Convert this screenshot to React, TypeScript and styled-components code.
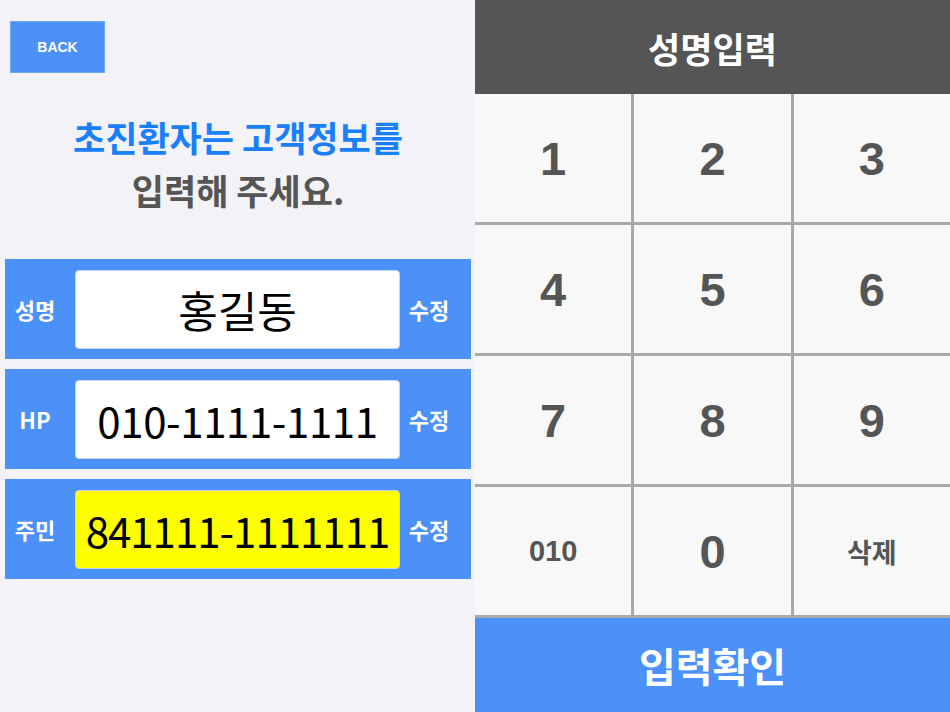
import React from 'react';
import styled, { createGlobalStyle } from 'styled-components';

const GlobalStyle = createGlobalStyle`
  html, body {
    margin: 0;
    padding: 0;
  }
  body {
    font-family: 'Liberation Sans', 'Noto Sans CJK KR', sans-serif;
  }
`;

const Screen = styled.div`
  display: flex;
  width: 950px;
  height: 712px;
  overflow: hidden;
`;

const LeftPanel = styled.div`
  display: flex;
  flex-direction: column;
  width: 475px;
  padding: 21px 4px 0 5px;
  box-sizing: border-box;
  background-color: #f2f2f7;
`;

const BackButton = styled.button`
  align-self: flex-start;
  width: 95px;
  height: 52px;
  margin-left: 5px;
  border: 1px solid #6aa6fa;
  background-color: #4b91f8;
  color: #ffffff;
  font-family: 'Liberation Sans', sans-serif;
  font-weight: 700;
  font-size: 14px;
`;

const Title = styled.div`
  margin-top: 37px;
  text-align: center;
  font-family: 'Noto Sans CJK KR', sans-serif;
  font-weight: 700;
  font-size: 35px;
  line-height: 53px;
  color: #555555;
`;

const TitleAccent = styled.span`
  color: #1a7ffb;
`;

const Rows = styled.div`
  display: flex;
  flex-direction: column;
  gap: 10px;
  margin-top: 43px;
`;

const InfoRow = styled.div`
  display: flex;
  align-items: center;
  height: 100px;
  width: 466px;
  background-color: #4b91f8;
`;

const RowLabel = styled.div<{ $w: number }>`
  width: ${(p) => p.$w}px;
  text-align: center;
  color: #ffffff;
  font-family: 'Noto Sans CJK KR', sans-serif;
  font-weight: 700;
  font-size: 22px;
`;

const ValueBox = styled.div<{ $active?: boolean; $size: number; $track: number }>`
  display: flex;
  align-items: center;
  justify-content: center;
  width: 325px;
  height: 79px;
  margin-left: 10px;
  box-sizing: border-box;
  border: 1px solid #c8d6ea;
  border-radius: 4px;
  background-color: ${(p) => (p.$active ? '#ffff00' : '#ffffff')};
  color: #000000;
  font-family: 'Noto Sans CJK KR', sans-serif;
  font-size: ${(p) => p.$size}px;
  letter-spacing: ${(p) => p.$track}px;
  white-space: nowrap;
`;

const RightPanel = styled.div`
  display: flex;
  flex-direction: column;
  flex: 1;
  background-color: #f8f8f8;
`;

const Header = styled.div`
  display: flex;
  align-items: center;
  justify-content: center;
  height: 94px;
  background-color: #555555;
  color: #ffffff;
  font-family: 'Noto Sans CJK KR', sans-serif;
  font-weight: 700;
  font-size: 35px;
`;

const Keypad = styled.div`
  display: grid;
  grid-template-columns: 1fr 1fr 1fr;
  grid-template-rows: repeat(4, 128px);
  gap: 3px;
  padding-bottom: 3px;
  background-color: #a9a9a9;
`;

const Key = styled.div<{ $size?: number }>`
  display: flex;
  align-items: center;
  justify-content: center;
  background-color: #f8f8f8;
  color: #555555;
  font-family: 'Liberation Sans', 'Noto Sans CJK KR', sans-serif;
  font-weight: 700;
  font-size: ${(p) => p.$size || 47}px;
`;

const KoreanKey = styled(Key)`
  font-family: 'Noto Sans CJK KR', sans-serif;
`;

const ConfirmButton = styled.div`
  display: flex;
  flex: 1;
  align-items: center;
  justify-content: center;
  background-color: #4b91f8;
  color: #ffffff;
  font-family: 'Noto Sans CJK KR', sans-serif;
  font-weight: 700;
  font-size: 40px;
`;

const fields = [
  { label: '성명', value: '홍길동', size: 43, track: 0 },
  { label: 'HP', value: '010-1111-1111', size: 42, track: -0.4 },
  { label: '주민', value: '841111-1111111', size: 42, track: -1, active: true },
];

const digits = ['1', '2', '3', '4', '5', '6', '7', '8', '9'];

export default function App() {
  return (
    <>
      <GlobalStyle />
      <Screen>
        <LeftPanel>
          <BackButton>BACK</BackButton>
          <Title>
            <TitleAccent>초진환자는 고객정보를</TitleAccent>
            <br />
            입력해 주세요.
          </Title>
          <Rows>
            {fields.map((f) => (
              <InfoRow key={f.label}>
                <RowLabel $w={60}>{f.label}</RowLabel>
                <ValueBox $active={f.active} $size={f.size} $track={f.track}>
                  {f.value}
                </ValueBox>
                <RowLabel $w={58}>수정</RowLabel>
              </InfoRow>
            ))}
          </Rows>
        </LeftPanel>
        <RightPanel>
          <Header>성명입력</Header>
          <Keypad>
            {digits.map((d) => (
              <Key key={d}>{d}</Key>
            ))}
            <Key $size={29}>010</Key>
            <Key>0</Key>
            <KoreanKey $size={27}>삭제</KoreanKey>
          </Keypad>
          <ConfirmButton>입력확인</ConfirmButton>
        </RightPanel>
      </Screen>
    </>
  );
}
